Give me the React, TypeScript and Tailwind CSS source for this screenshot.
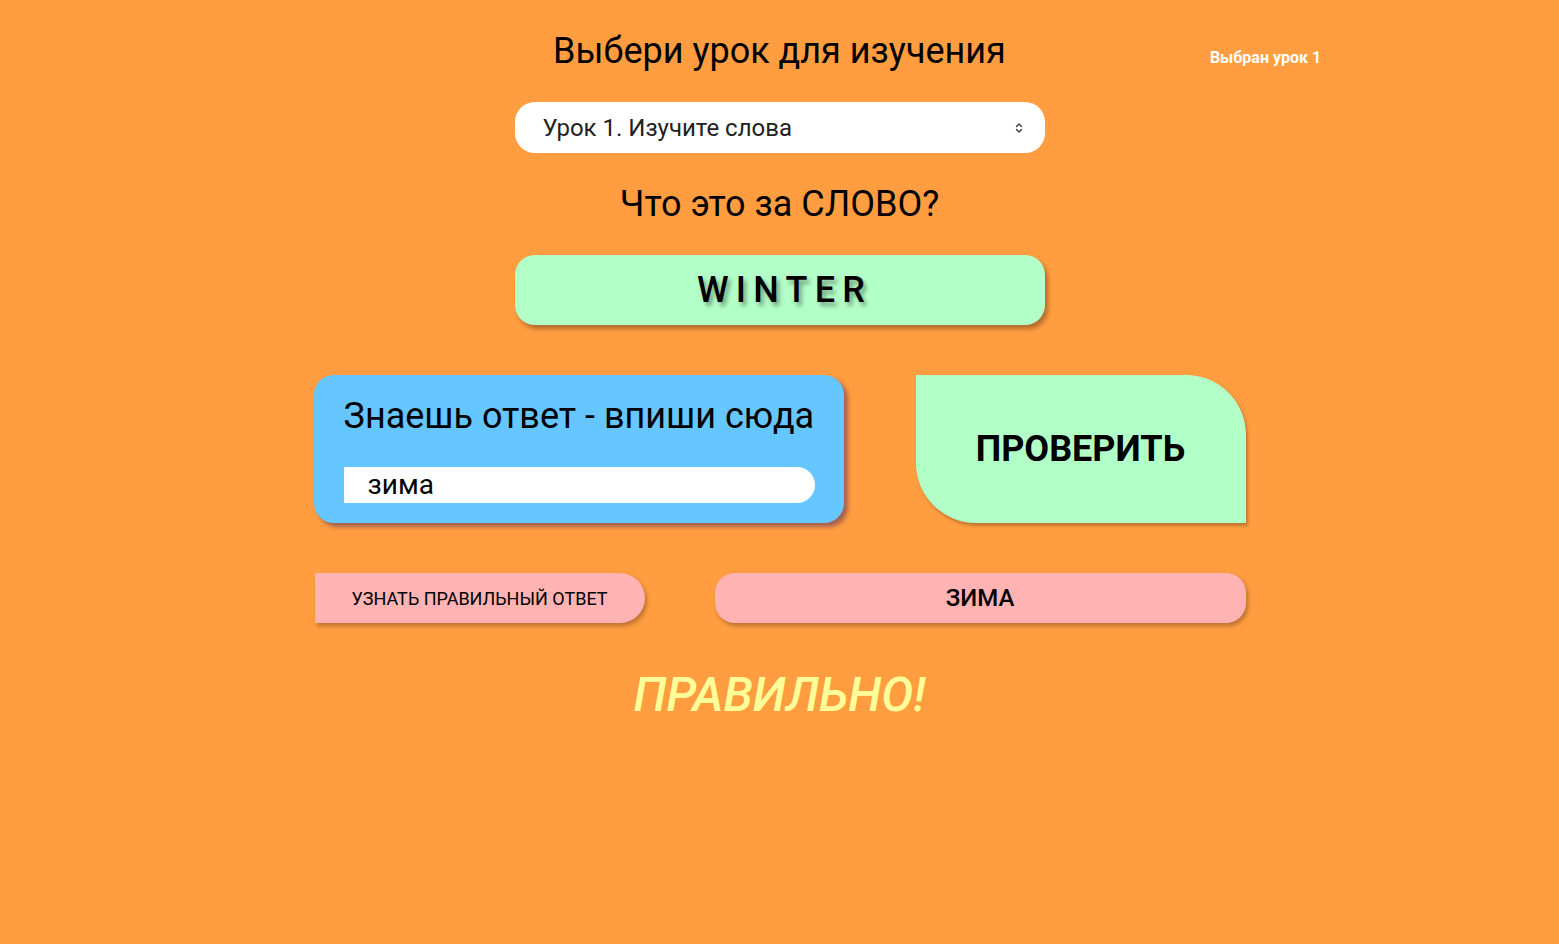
import { ChevronsUpDown } from "lucide-react";

export default function App() {
  return (
    <div className="min-h-[944px] w-full bg-[#ff9d40] font-['Roboto',sans-serif] text-black">
      {/* header */}
      <div className="grid grid-cols-[1fr_auto_1fr] items-center pt-[30px]">
        <div />
        <h1 className="text-[36px] leading-[42px] font-normal">Выбери урок для изучения</h1>
        <div className="pl-[204px] pt-[14px] text-[16px] font-bold text-white">Выбран урок 1</div>
      </div>

      <div className="mx-auto flex w-[932px] flex-col items-center">
        {/* lesson select */}
        <div className="mt-[30px] flex h-[51px] w-[530px] items-center justify-between rounded-[20px] bg-white pl-[28px] pr-[20px]">
          <span className="text-[24px] text-[#222]">Урок 1. Изучите слова</span>
          <ChevronsUpDown className="h-[12px] w-[12px] text-[#333]" strokeWidth={2.5} />
        </div>

        <h2 className="mt-[30px] text-[36px] leading-[42px]">Что это за СЛОВО?</h2>

        {/* word card */}
        <div className="mt-[30px] flex h-[70px] w-[530px] items-center justify-center rounded-[20px] bg-[#b3ffc8] shadow-[3px_4px_4px_rgba(90,50,20,0.45)]">
          <span className="pl-[10px] text-[36px] font-medium tracking-[0.2em] [text-shadow:3px_4px_4px_rgba(0,0,0,0.35)]">
            WINTER
          </span>
        </div>

        {/* answer row */}
        <div className="mt-[50px] flex w-full gap-[72px]">
          <div className="flex h-[148px] w-[530px] flex-col rounded-[20px] bg-[#66c6ff] pl-[30px] pr-[10px] pt-[20px] shadow-[4px_4px_4px_rgba(90,50,90,0.55)]">
            <p className="whitespace-nowrap text-[36px] leading-[42px]">Знаешь ответ - впиши сюда</p>
            <div className="mt-[30px] flex h-[36px] w-[471px] items-center rounded-r-full bg-white pl-[24px] text-[28px]">
              зима
            </div>
          </div>
          <button className="flex h-[148px] w-[330px] items-center justify-center rounded-tr-[60px] rounded-bl-[60px] bg-[#b3ffc8] text-[36px] font-bold shadow-[2px_3px_3px_rgba(90,50,20,0.35)]">
            ПРОВЕРИТЬ
          </button>
        </div>

        {/* buttons row */}
        <div className="mt-[50px] flex w-full gap-[70px] pl-[1px]">
          <button className="flex h-[50px] w-[330px] items-center justify-center rounded-l-[4px] rounded-r-full bg-[#ffb3b3] text-[18px] shadow-[2px_3px_4px_rgba(90,50,20,0.4)]">
            УЗНАТЬ ПРАВИЛЬНЫЙ ОТВЕТ
          </button>
          <button className="flex h-[50px] w-[531px] items-center justify-center rounded-[20px] bg-[#ffb3b3] text-[24px] font-medium shadow-[2px_3px_4px_rgba(90,50,20,0.4)]">
            ЗИМА
          </button>
        </div>

        <p className="mt-[44px] text-[48px] leading-[56px] font-medium italic text-[#ffff99]">ПРАВИЛЬНО!</p>
      </div>
    </div>
  );
}
